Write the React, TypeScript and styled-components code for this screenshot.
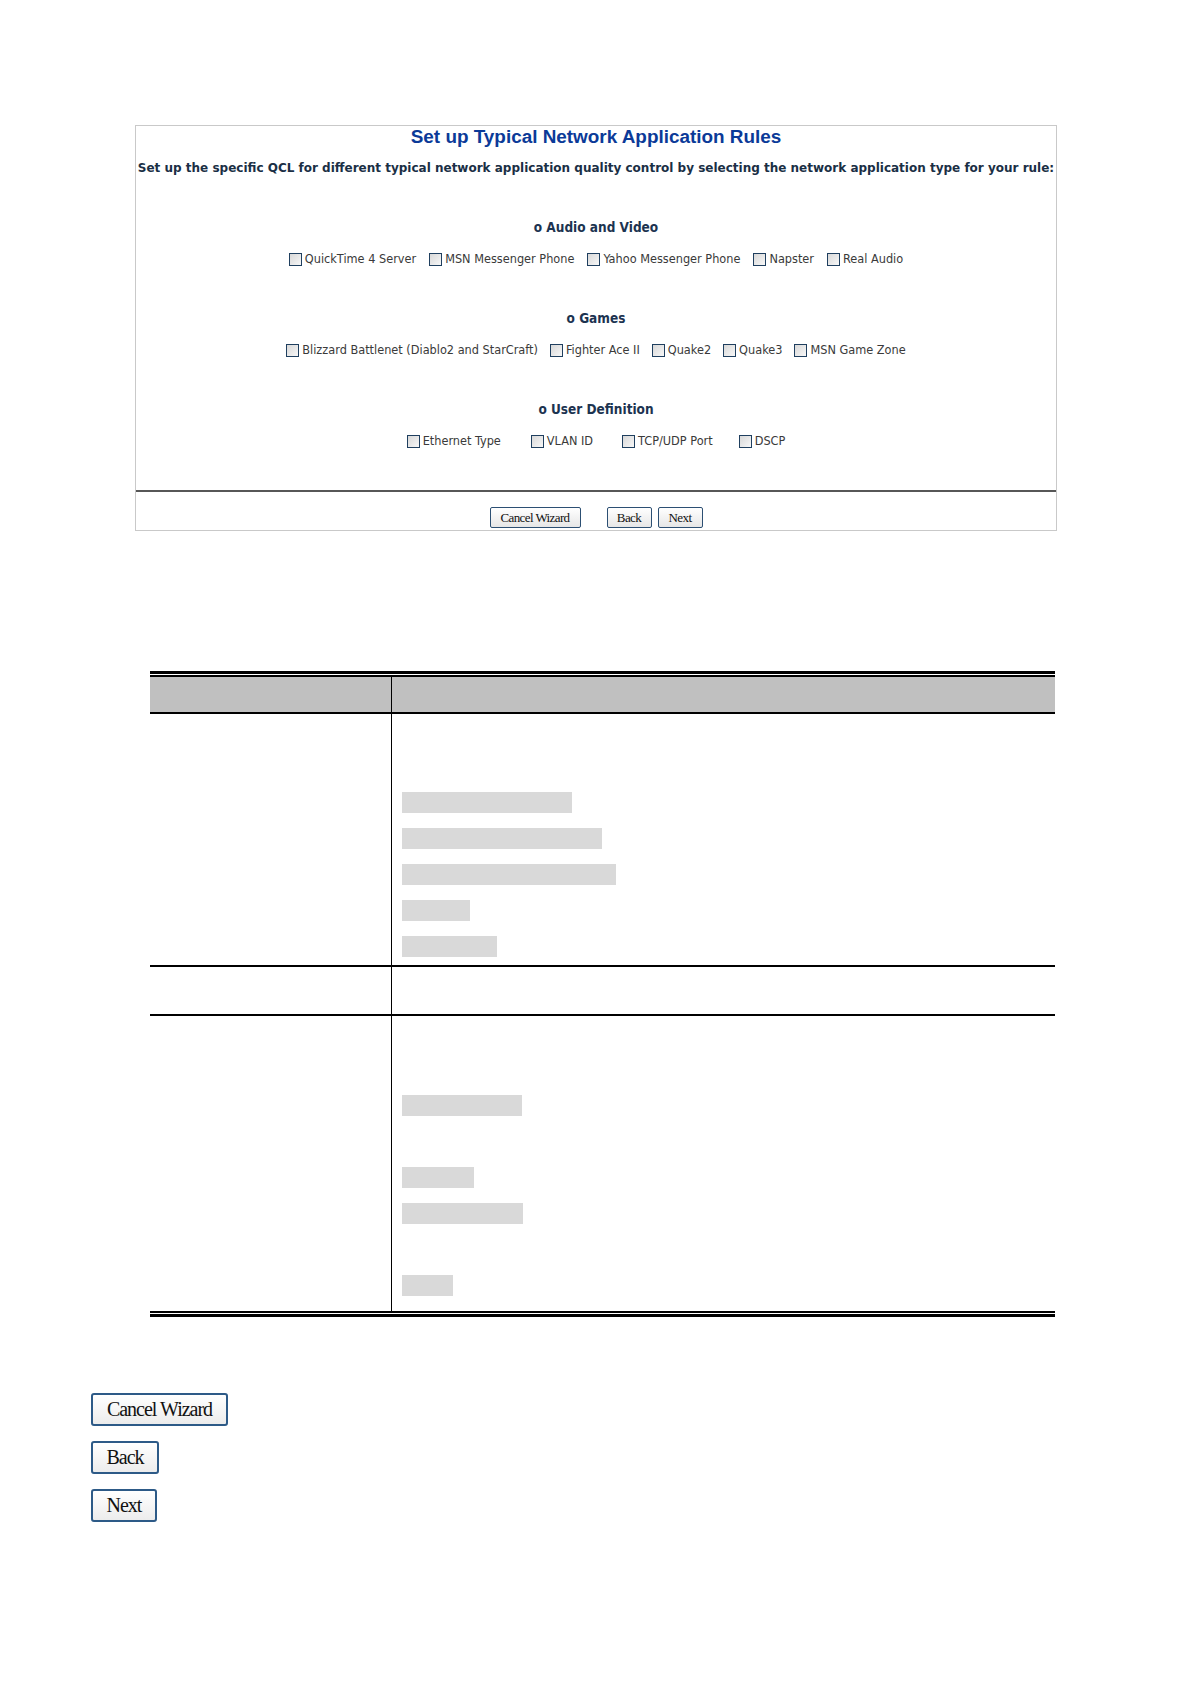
import { createGlobalStyle, styled } from "styled-components";

const GlobalStyle = createGlobalStyle`
  html, body {
    margin: 0;
    padding: 0;
    background: #fff;
  }
  body {
    font-family: "DejaVu Sans", "Liberation Sans", sans-serif;
  }
`;

const Page = styled.div`
  width: 1190px;
  min-height: 1684px;
  padding-top: 125px;
  box-sizing: border-box;
`;

const Wizard = styled.div`
  margin-left: 135px;
  width: 922px;
  border: 1px solid #c9c9c9;
  box-sizing: border-box;
  padding-bottom: 2px;
`;

const Title = styled.h1`
  margin: 0;
  text-align: center;
  font-family: "Liberation Sans", Arial, sans-serif;
  font-size: 18.9px;
  line-height: 22px;
  font-weight: bold;
  color: #0b3a98;
`;

const Subtitle = styled.p`
  margin: 12px 0 0;
  text-align: center;
  font-family: "DejaVu Sans", sans-serif;
  font-size: 12px;
  line-height: 16px;
  font-weight: bold;
  color: #1a2f45;
  white-space: nowrap;
`;

const Section = styled.div`
  margin-top: 43px;
  display: flex;
  flex-direction: column;
  align-items: center;
  gap: 16px;
`;

const Heading = styled.div`
  font-family: "DejaVu Sans Condensed", "DejaVu Sans", sans-serif;
  font-stretch: condensed;
  font-size: 13.5px;
  line-height: 16px;
  font-weight: bold;
  color: #1c3350;
`;

const CheckRow = styled.div`
  display: flex;
  align-items: center;
  height: 16px;
`;

const CheckItem = styled.label<{ $gap: number }>`
  display: flex;
  align-items: center;
  gap: 3px;
  margin-right: ${(p) => p.$gap}px;
  font-family: "DejaVu Sans Condensed", "DejaVu Sans", sans-serif;
  font-stretch: condensed;
  font-size: 12.6px;
  line-height: 16px;
  color: #3a3a3a;
  white-space: nowrap;

  &:last-child {
    margin-right: 0;
  }
`;

const Box = styled.span`
  display: inline-block;
  width: 11px;
  height: 11px;
  border: 1px solid #1f3f5f;
  background: linear-gradient(135deg, #d8d8d8, #f7f7f7);
`;

const Divider = styled.div`
  margin-top: 41px;
  height: 2px;
  background: #575757;
`;

const ButtonBar = styled.div`
  display: flex;
  justify-content: center;
  margin-top: 15px;
`;

const SmallButton = styled.button<{ $w: number; $ml?: number }>`
  width: ${(p) => p.$w}px;
  height: 21px;
  margin-left: ${(p) => p.$ml ?? 0}px;
  padding: 0;
  border: 1px solid #2c4f73;
  border-radius: 2px;
  background: linear-gradient(#ffffff, #e6e6e6);
  font-family: "Liberation Serif", "Times New Roman", serif;
  font-size: 13px;
  letter-spacing: -0.6px;
  color: #111;
`;

const TableWrap = styled.div`
  margin: 140px 0 0 150px;
  width: 905px;
  border-top: 3px solid #000;
  border-bottom: 3px solid #000;
  padding: 1px 0;
`;

const Grid = styled.div`
  display: grid;
  grid-template-columns: 241px 1fr;
  border-top: 2px solid #000;
  border-bottom: 2px solid #000;
`;

const Cell = styled.div<{ $head?: boolean; $h: number; $last?: boolean; $right?: boolean }>`
  height: ${(p) => p.$h}px;
  background: ${(p) => (p.$head ? "#c0c0c0" : "#fff")};
  border-bottom: ${(p) => (p.$last ? "none" : "2px solid #000")};
  border-left: ${(p) => (p.$right ? "1px solid #000" : "none")};
  box-sizing: content-box;
`;

const Lines = styled.div<{ $top: number }>`
  display: flex;
  flex-direction: column;
  gap: 15px;
  padding: ${(p) => p.$top}px 0 0 10px;
`;

const Blur = styled.div<{ $w: number }>`
  width: ${(p) => p.$w}px;
  height: 21px;
  background: ${(p) => (p.$w ? "#d9d9d9" : "transparent")};
`;

const BottomButtons = styled.div`
  margin: 76px 0 0 91px;
  display: flex;
  flex-direction: column;
  align-items: flex-start;
  gap: 15px;
`;

const BigButton = styled.button<{ $w: number }>`
  width: ${(p) => p.$w}px;
  height: 33px;
  padding: 0;
  border: 2px solid #2d5a87;
  border-radius: 3px;
  background: linear-gradient(#ffffff, #ececec);
  font-family: "Liberation Serif", "Times New Roman", serif;
  font-size: 20px;
  letter-spacing: -1px;
  color: #111;
`;

const sections = [
  {
    title: "o Audio and Video",
    items: [
      { name: "QuickTime 4 Server", gap: 13 },
      { name: "MSN Messenger Phone", gap: 13 },
      { name: "Yahoo Messenger Phone", gap: 13 },
      { name: "Napster", gap: 13 },
      { name: "Real Audio", gap: 0 },
    ],
  },
  {
    title: "o Games",
    items: [
      { name: "Blizzard Battlenet (Diablo2 and StarCraft)", gap: 12 },
      { name: "Fighter Ace II", gap: 12 },
      { name: "Quake2", gap: 12 },
      { name: "Quake3", gap: 12 },
      { name: "MSN Game Zone", gap: 0 },
    ],
  },
  {
    title: "o User Definition",
    items: [
      { name: "Ethernet Type", gap: 30 },
      { name: "VLAN ID", gap: 29 },
      { name: "TCP/UDP Port", gap: 26 },
      { name: "DSCP", gap: 0 },
    ],
  },
];

// widths of the greyed-out lines, 0 = blank line
const row1 = [170, 200, 214, 68, 95];
const row3 = [120, 0, 72, 121, 0, 51];

export default function App() {
  return (
    <Page>
      <GlobalStyle />
      <Wizard>
        <Title>Set up Typical Network Application Rules</Title>
        <Subtitle>
          Set up the specific QCL for different typical network application quality control by
          selecting the network application type for your rule:
        </Subtitle>
        {sections.map((s) => (
          <Section key={s.title}>
            <Heading>{s.title}</Heading>
            <CheckRow>
              {s.items.map((it) => (
                <CheckItem key={it.name} $gap={it.gap}>
                  <Box />
                  {it.name}
                </CheckItem>
              ))}
            </CheckRow>
          </Section>
        ))}
        <Divider />
        <ButtonBar>
          <SmallButton $w={91}>Cancel Wizard</SmallButton>
          <SmallButton $w={45} $ml={26}>
            Back
          </SmallButton>
          <SmallButton $w={45} $ml={6}>
            Next
          </SmallButton>
        </ButtonBar>
      </Wizard>

      <TableWrap>
        <Grid>
          <Cell $head $h={35} />
          <Cell $head $h={35} $right />
          <Cell $h={251} />
          <Cell $h={251} $right>
            <Lines $top={78}>
              {row1.map((w, i) => (
                <Blur key={i} $w={w} />
              ))}
            </Lines>
          </Cell>
          <Cell $h={47} />
          <Cell $h={47} $right />
          <Cell $h={295} $last />
          <Cell $h={295} $last $right>
            <Lines $top={79}>
              {row3.map((w, i) => (
                <Blur key={i} $w={w} />
              ))}
            </Lines>
          </Cell>
        </Grid>
      </TableWrap>

      <BottomButtons>
        <BigButton $w={137}>Cancel Wizard</BigButton>
        <BigButton $w={68}>Back</BigButton>
        <BigButton $w={66}>Next</BigButton>
      </BottomButtons>
    </Page>
  );
}
